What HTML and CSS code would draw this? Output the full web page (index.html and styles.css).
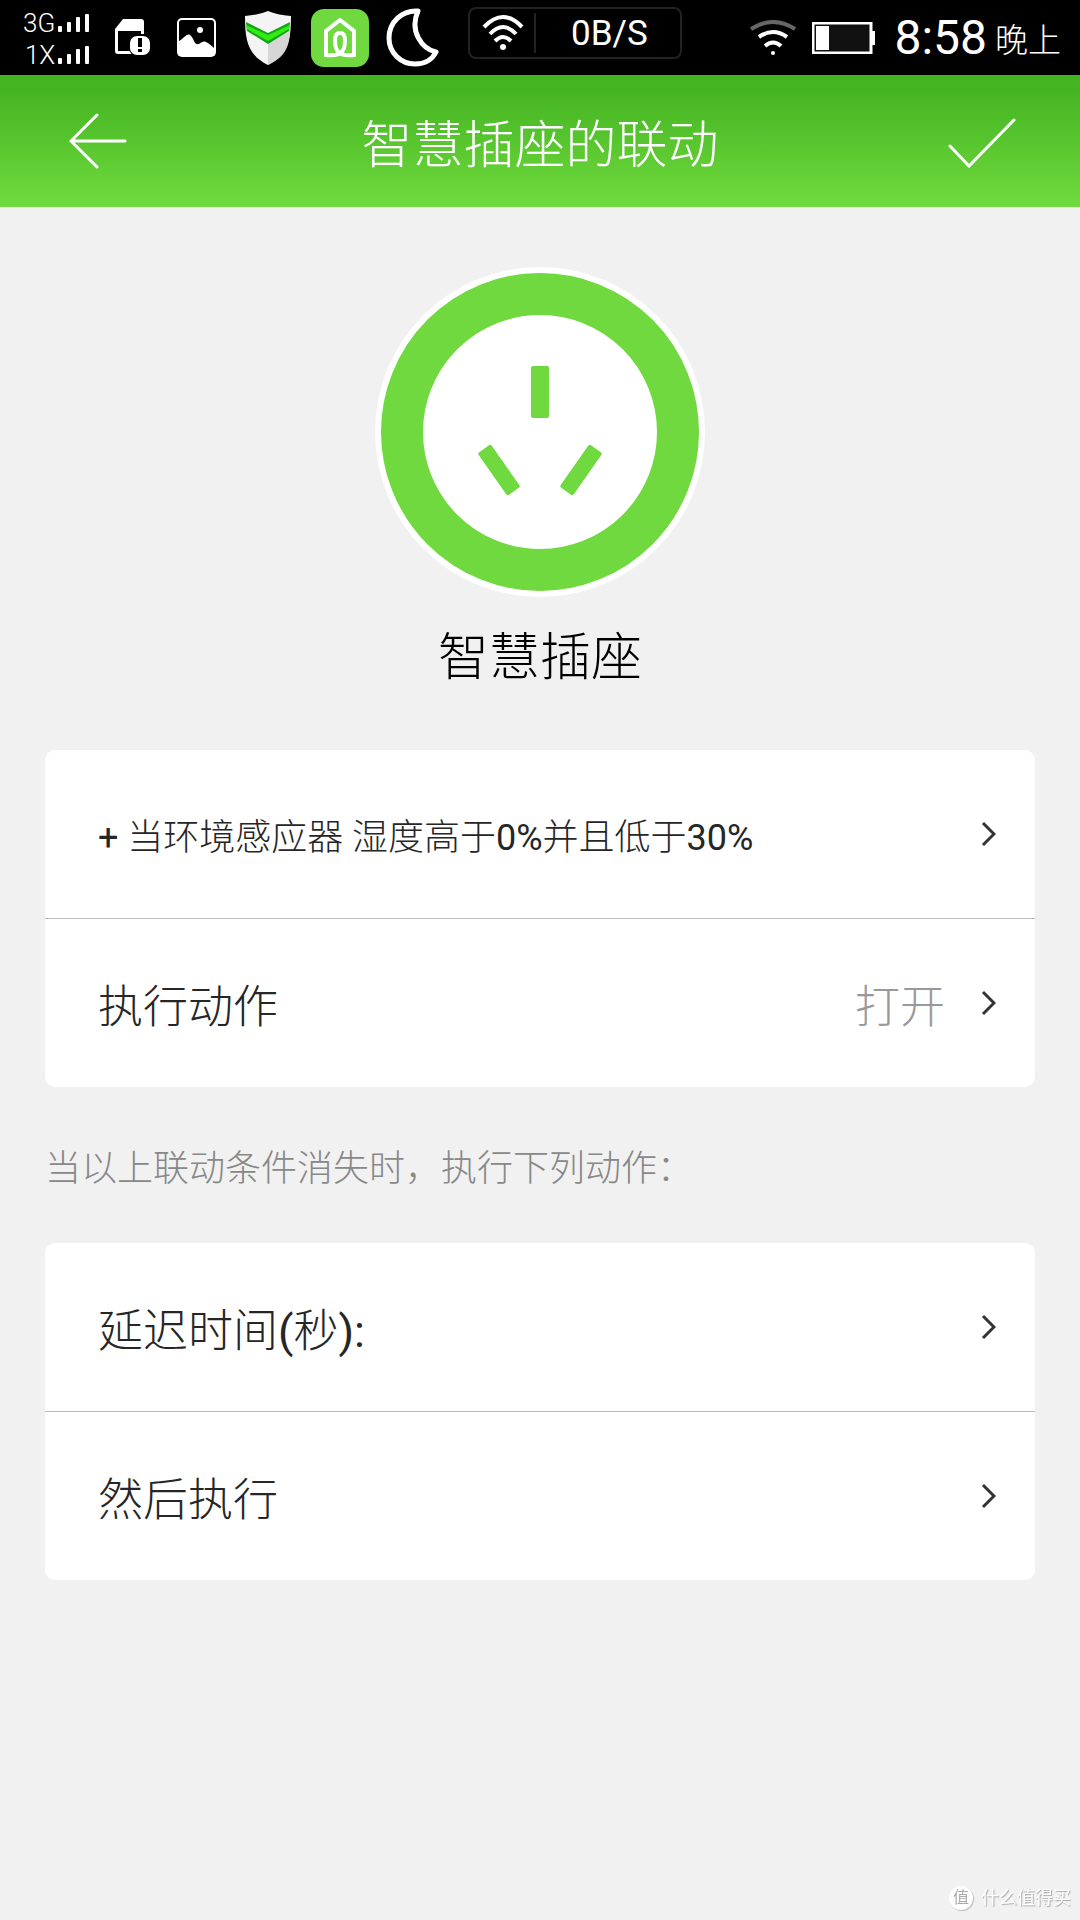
FILE: index.html
```html
<!DOCTYPE html>
<html lang="zh-CN">
<head>
<meta charset="utf-8">
<meta name="viewport" content="width=device-width, initial-scale=1">
<title>智慧插座的联动</title>
<link rel="stylesheet" href="styles.css">
</head>
<body>
<div class="status-bar">
  <div class="status-left">
    <div class="signals">
      <div class="signal"><span>3G</span>
        <svg width="32" height="19" viewBox="0 0 32 19" fill="#fff" aria-hidden="true"><rect y="13" width="4" height="6" rx="1"/><rect x="9" y="9" width="4" height="10" rx="1"/><rect x="18" y="4" width="4" height="15" rx="1"/><rect x="27" y="1" width="4" height="18" rx="1"/></svg>
      </div>
      <div class="signal"><span>1X</span>
        <svg width="32" height="19" viewBox="0 0 32 19" fill="#fff" aria-hidden="true"><rect y="13" width="4" height="6" rx="1"/><rect x="9" y="9" width="4" height="10" rx="1"/><rect x="18" y="4" width="4" height="15" rx="1"/><rect x="27" y="1" width="4" height="18" rx="1"/></svg>
      </div>
    </div>
    <svg class="icon-sim" width="36" height="37" viewBox="0 0 36 37" aria-hidden="true">
      <path d="M8 0H26Q29 0 29 3V35H3Q0 35 0 32V10Z" fill="#fff"/>
      <path d="M3 12H26V34H3Z" fill="#000"/><path d="M2 32H16V35H3Z" fill="#fff"/>
      <rect x="14" y="15" width="23" height="22" rx="8" fill="#000"/>
      <rect x="15" y="17" width="20" height="19" rx="7" fill="#fff"/>
      <path d="M23 19h4v9h-4zM23 30h4v3h-4z" fill="#000"/>
    </svg>
    <svg class="icon-photo" width="39" height="39" viewBox="0 0 39 39" aria-hidden="true">
      <rect x="1" y="1" width="37" height="37" rx="4" fill="none" stroke="#fff" stroke-width="2"/>
      <path d="M1 24C6 21 10 15 13 17C17 20 17 26 20 26C23 27 25 22 29 24C33 26 35 28 38 31V36Q38 38 36 38H3Q1 38 1 36Z" fill="#fff"/>
      <circle cx="23" cy="12" r="3" fill="#fff"/>
    </svg>
    <svg class="icon-shield" width="46" height="54" viewBox="0 0 46 54" aria-hidden="true">
      <path d="M0 5Q14 4 23 0Q32 4 46 5C46 30 43 44 23 54C3 44 0 30 0 5Z" fill="#f4f4f4"/>
      <path d="M23 32L45 20C44 38 39 46 23 54Z" fill="#d6d6d6"/>
      <path d="M1 11L23 22L45 11L44 20L23 33L2 20Z" fill="#14a514"/>
      <path d="M1 14L23 24L45 14L44 18L23 30L2 18Z" fill="#2fec12"/>
    </svg>
    <svg class="icon-home" width="58" height="58" viewBox="0 0 58 58" aria-hidden="true">
      <rect width="58" height="58" rx="13" fill="#6fd93f"/>
      <path d="M28 45Q22 47 15 46V22L29 11L43 22V46Q36 47 30 45C25 42 24 38 24 31Q24 24 29 24Q34 24 34 31C34 38 33 42 28 45" fill="none" stroke="#fff" stroke-width="4"/>
    </svg>
    <svg class="icon-moon" width="54" height="59" viewBox="0 0 54 59" aria-hidden="true">
      <path d="M32 3C16 2 3 14 3 30C3 45 15 56 29 56C39 56 46 52 50 44C36 41 23 23 32 3Z" fill="none" stroke="#fff" stroke-width="5" stroke-linejoin="round"/>
    </svg>
    <div class="netspeed">
      <svg class="netspeed-wifi" width="42" height="36" viewBox="0 0 42 36" fill="none" stroke="#fff" stroke-width="4" aria-hidden="true">
        <path d="M2 12Q21-8 40 12M8 19Q21 5 34 19M13 26Q21 18 29 26"/><circle cx="21" cy="32" r="3" fill="#fff" stroke="none"/>
      </svg>
      <span class="netspeed-value">0B/S</span>
    </div>
  </div>
  <div class="status-right">
    <svg class="icon-wifi" width="46" height="36" viewBox="0 0 46 36" fill="none" stroke="#fff" stroke-width="4" aria-hidden="true">
      <path d="M1 9Q23-5 45 9" stroke="#666"/><path d="M9 17Q23 7 37 17M15 26Q23 19 31 26"/><circle cx="23" cy="33" r="2" fill="#fff" stroke="none"/>
    </svg>
    <svg class="icon-battery" width="63" height="32" viewBox="0 0 63 32" aria-hidden="true">
      <rect x="1" y="1" width="58" height="30" fill="#111" stroke="#fff" stroke-width="3"/><rect x="4" y="4" width="13" height="24" fill="#fff"/><path d="M60 9h3v14h-3z" fill="#fff"/>
    </svg>
    <span class="clock">8:58</span>
    <span class="period">晚上</span>
  </div>
</div>

<header class="title-bar">
  <button class="bar-button" type="button" aria-label="返回">
    <svg width="58" height="56" viewBox="0 0 58 56" fill="none" stroke="#fff" stroke-width="3" stroke-linecap="round" aria-hidden="true"><path d="M28 2L2 28L28 54M2 28H56"/></svg>
  </button>
  <h1 class="title">智慧插座的联动</h1>
  <button class="bar-button" type="button" aria-label="完成">
    <svg width="68" height="54" viewBox="0 0 68 54" fill="none" stroke="#fff" stroke-width="3" stroke-linecap="round" aria-hidden="true"><path d="M2 32L21 52L66 6"/></svg>
  </button>
</header>

<main class="content">
  <section class="device">
    <svg class="socket" width="330" height="330" viewBox="0 0 330 330" aria-hidden="true">
      <circle cx="165" cy="165" r="165" fill="#fff"/>
      <circle cx="165" cy="165" r="138" fill="none" stroke="#6fd93f" stroke-width="42"/>
      <g fill="#6fd93f">
        <rect x="156" y="99" width="18" height="52" rx="2"/>
        <rect x="116" y="177" width="16" height="52" rx="2" transform="rotate(-35 124 203)"/>
        <rect x="198" y="177" width="16" height="52" rx="2" transform="rotate(35 206 203)"/>
      </g>
    </svg>
    <h2 class="device-name">智慧插座</h2>
  </section>

  <div class="card">
    <button class="row" type="button">
      <span class="row-label row-label-small"><span class="latin">+</span> 当环境感应器 湿度高于<span class="latin">0%</span>并且低于<span class="latin">30%</span></span>
      <svg class="chevron" width="15" height="26" viewBox="0 0 15 26" aria-hidden="true"><path d="M2 2L13 13L2 24"/></svg>
    </button>
    <button class="row" type="button">
      <span class="row-label">执行动作</span>
      <span class="row-value">打开</span>
      <svg class="chevron" width="15" height="26" viewBox="0 0 15 26" aria-hidden="true"><path d="M2 2L13 13L2 24"/></svg>
    </button>
  </div>

  <p class="hint">当以上联动条件消失时，执行下列动作：</p>

  <div class="card">
    <button class="row" type="button">
      <span class="row-label">延迟时间<span class="latin">(</span>秒<span class="latin">):</span></span>
      <svg class="chevron" width="15" height="26" viewBox="0 0 15 26" aria-hidden="true"><path d="M2 2L13 13L2 24"/></svg>
    </button>
    <button class="row" type="button">
      <span class="row-label">然后执行</span>
      <svg class="chevron" width="15" height="26" viewBox="0 0 15 26" aria-hidden="true"><path d="M2 2L13 13L2 24"/></svg>
    </button>
  </div>
</main>

<div class="watermark"><span class="watermark-badge">值</span><span>什么值得买</span></div>
</body>
</html>
```

FILE: styles.css
```css
* {
  box-sizing: border-box;
}

body {
  margin: 0;
  min-height: 100vh;
  background: #f1f1f1;
  color: #262626;
  font-family: Roboto, "Noto Sans CJK SC", sans-serif;
  font-weight: 300;
}

svg {
  display: block;
  flex: none;
}

button {
  border: 0;
  background: none;
  color: inherit;
  font: inherit;
  cursor: pointer;
}

/* Status bar */
.status-bar {
  display: flex;
  justify-content: space-between;
  height: 75px;
  padding: 0 19px 0 23px;
  background: #000;
  color: #fff;
}

.status-left,
.status-right {
  display: flex;
  align-items: center;
}

.signals {
  display: grid;
  gap: 4px;
  width: 67px;
  padding-top: 2px;
}

.signal {
  display: flex;
  align-items: center;
  justify-content: flex-end;
  gap: 3px;
  font-size: 26px;
  line-height: 28px;
}

.icon-sim {
  margin-left: 25px;
}

.icon-photo {
  margin-left: 26px;
}

.icon-shield {
  margin-left: 29px;
}

.icon-home {
  margin-left: 20px;
}

.icon-moon {
  margin-left: 17px;
}

.netspeed {
  display: flex;
  align-items: center;
  align-self: flex-start;
  width: 214px;
  height: 52px;
  margin: 7px 0 0 28px;
  padding-left: 12px;
  border: 2px solid #222;
  border-radius: 8px;
}

.netspeed-wifi {
  margin-right: 10px;
}

.netspeed-value {
  flex: 1;
  padding: 2px 0 0 35px;
  border-left: 2px solid #222;
  font-size: 35px;
  font-weight: 400;
  line-height: 38px;
}

.icon-battery {
  margin-left: 16px;
}

.clock {
  margin-left: 19px;
  font-size: 48px;
  font-weight: 400;
}

.period {
  margin-left: 8px;
  font-size: 33px;
}

/* Title bar */
.title-bar {
  display: flex;
  align-items: center;
  justify-content: space-between;
  height: 132px;
  padding: 0 62px;
  background: linear-gradient(#43b320 8%, #70db3f);
  color: #fff;
}

.bar-button {
  display: flex;
  align-items: center;
  width: 72px;
  height: 96px;
  padding: 0;
  justify-content: center;
}

.title {
  margin: 0;
  font-size: 51px;
  font-weight: 300;
}

/* Content */
.content {
  padding: 60px 45px;
}

.device {
  display: flex;
  flex-direction: column;
  align-items: center;
  gap: 23px;
  margin-bottom: 54px;
}

.device-name {
  margin: 0;
  color: #000;
  font-size: 51px;
  font-weight: 300;
  line-height: 76px;
}

.card {
  overflow: hidden;
  border-radius: 10px;
  background: #fff;
}

.row {
  display: flex;
  align-items: center;
  width: 100%;
  height: 168px;
  padding: 0 39px 0 53px;
  text-align: left;
}

.row + .row {
  height: 169px;
  border-top: 1px solid #bbb;
}

.row-label {
  flex: 1;
  font-size: 45px;
}

.row-label-small {
  font-size: 36px;
}

.latin {
  font-weight: 400;
}

.row-value {
  margin-right: 36px;
  color: #999;
  font-size: 45px;
}

.chevron {
  fill: none;
  stroke: #333;
  stroke-width: 3;
}

.hint {
  margin: 56px 0 48px;
  color: #888;
  font-size: 36px;
  line-height: 52px;
}

.watermark {
  position: fixed;
  right: 9px;
  bottom: 9px;
  display: flex;
  align-items: center;
  gap: 8px;
  color: #fff;
  font-size: 18px;
  font-weight: 400;
  line-height: 26px;
  text-shadow: 1px 1px 1px #aaa;
}

.watermark-badge {
  width: 24px;
  height: 24px;
  border-radius: 50%;
  background: #fff;
  box-shadow: 1px 1px 1px #bbb;
  color: #aaa;
  font-size: 16px;
  line-height: 24px;
  text-align: center;
  text-shadow: none;
}
```
